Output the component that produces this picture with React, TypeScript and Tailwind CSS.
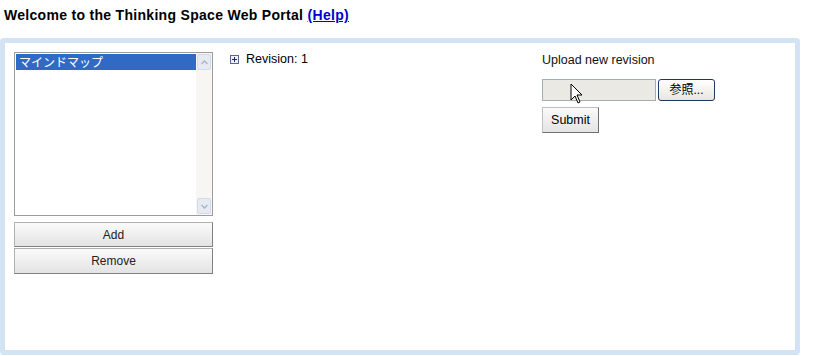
import React from "react";

function PlusBox() {
  return (
    <svg width="9" height="9" viewBox="0 0 9 9" className="shrink-0">
      <rect x="0.5" y="0.5" width="8" height="8" fill="#eef0f8" stroke="#5b6590" />
      <path d="M2 4.5H7M4.5 2V7" stroke="#1f2a60" strokeWidth="1" />
    </svg>
  );
}

function Cursor() {
  return (
    <svg width="14" height="22" viewBox="0 0 14 22" className="absolute left-[28px] top-[4px]">
      <path d="M1 1 L1 17 L5 13 L8 20 L10 19 L7 12 L12 12 Z" fill="#fff" stroke="#000" strokeWidth="1" strokeLinejoin="round" />
    </svg>
  );
}

export default function App() {
  const font = { fontFamily: '"Liberation Sans", Arial, sans-serif' };
  return (
    <div className="w-[819px] h-[356px] bg-white relative overflow-hidden" style={font}>
      <div className="h-[38px] pl-[4px] pt-[7px] text-[14px] tracking-[0.3px] font-bold text-black leading-[16px]">
        Welcome to the Thinking Space Web Portal{" "}
        <a className="text-[#0000cc] underline" href="#">(Help)</a>
      </div>
      <div className="w-[800px] h-[317px] border-[5px] border-[#d3e3f4] rounded-[4px] flex pt-[9px] pl-[9px]">
        <div className="w-[199px] flex flex-col">
          <div className="h-[164px] border border-[#9c9c9c] flex bg-white">
            <div className="flex-1 pt-px pl-px">
              <div
                className="h-[16px] bg-[#316ac5] text-white text-[12px] leading-[16px] pl-[3px]"
                style={{ fontFamily: '"Noto Sans CJK JP", sans-serif' }}
              >
                マインドマップ
              </div>
            </div>
            <div className="w-[16px] bg-[#f7f6f2] flex flex-col justify-between">
              <div className="h-[16px] m-px rounded-[2px] bg-[#e6eaf2] border border-[#d4dae6] flex items-center justify-center">
                <svg width="7" height="5" viewBox="0 0 7 5"><path d="M0.5 4 L3.5 1 L6.5 4" stroke="#a8b2c8" fill="none" strokeWidth="1.3" /></svg>
              </div>
              <div className="h-[16px] m-px rounded-[2px] bg-[#e6eaf2] border border-[#d4dae6] flex items-center justify-center">
                <svg width="7" height="5" viewBox="0 0 7 5"><path d="M0.5 1 L3.5 4 L6.5 1" stroke="#a8b2c8" fill="none" strokeWidth="1.3" /></svg>
              </div>
            </div>
          </div>
          <button className="mt-[6px] h-[25px] border border-[#b0b0b0] border-b-[#808080] border-r-[#808080] bg-gradient-to-b from-[#fbfbfb] to-[#e3e3e3] text-[12px] text-[#222]">
            Add
          </button>
          <button className="mt-[1px] h-[26px] border border-[#b0b0b0] border-b-[#808080] border-r-[#808080] bg-gradient-to-b from-[#fbfbfb] to-[#e3e3e3] text-[12px] text-[#222]">
            Remove
          </button>
        </div>
        <div className="w-[329px] pl-[17px] pt-0 flex gap-[7px] items-start text-[12.5px] leading-[14px]">
          <div className="pt-[3px]"><PlusBox /></div>
          <span>Revision: 1</span>
        </div>
        <div className="flex flex-col pt-px text-[12.5px]">
          <div className="leading-[14px] text-[#111]">Upload new revision</div>
          <div className="flex mt-[12px] gap-[2px] relative">
            <div className="w-[114px] h-[22px] border border-[#a5acb2] bg-[#ebe9e3]" />
            <button
              className="w-[57px] h-[22px] border border-[#1f3763] rounded-[3px] bg-gradient-to-b from-white to-[#e8e6dd] text-[12px] leading-[20px]"
              style={{ fontFamily: '"Liberation Sans", "Noto Sans CJK JP", sans-serif' }}
            >
              参照...
            </button>
            <Cursor />
          </div>
          <button className="mt-[6px] w-[57px] h-[26px] border border-[#c0c0c0] border-b-[#707070] border-r-[#707070] bg-gradient-to-b from-[#fafafa] to-[#e4e4e4] text-[12.5px]">
            Submit
          </button>
        </div>
      </div>
    </div>
  );
}
